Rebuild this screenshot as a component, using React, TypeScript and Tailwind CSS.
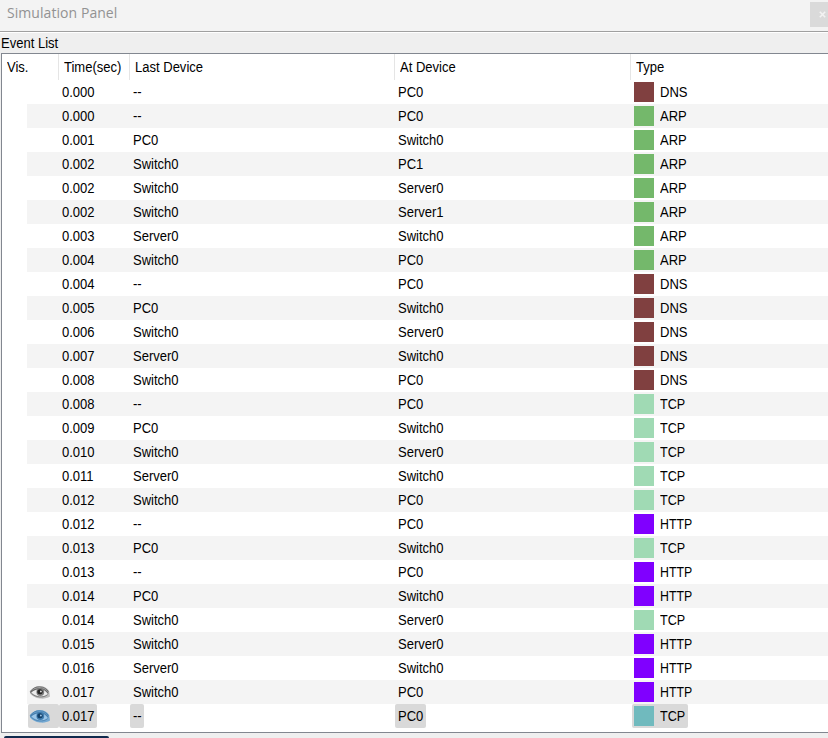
type Kind = "DNS" | "ARP" | "TCP" | "HTTP";
type Event = [time: string, last: string, at: string, kind: Kind];

const events: Event[] = [
  ["0.000", "--", "PC0", "DNS"],
  ["0.000", "--", "PC0", "ARP"],
  ["0.001", "PC0", "Switch0", "ARP"],
  ["0.002", "Switch0", "PC1", "ARP"],
  ["0.002", "Switch0", "Server0", "ARP"],
  ["0.002", "Switch0", "Server1", "ARP"],
  ["0.003", "Server0", "Switch0", "ARP"],
  ["0.004", "Switch0", "PC0", "ARP"],
  ["0.004", "--", "PC0", "DNS"],
  ["0.005", "PC0", "Switch0", "DNS"],
  ["0.006", "Switch0", "Server0", "DNS"],
  ["0.007", "Server0", "Switch0", "DNS"],
  ["0.008", "Switch0", "PC0", "DNS"],
  ["0.008", "--", "PC0", "TCP"],
  ["0.009", "PC0", "Switch0", "TCP"],
  ["0.010", "Switch0", "Server0", "TCP"],
  ["0.011", "Server0", "Switch0", "TCP"],
  ["0.012", "Switch0", "PC0", "TCP"],
  ["0.012", "--", "PC0", "HTTP"],
  ["0.013", "PC0", "Switch0", "TCP"],
  ["0.013", "--", "PC0", "HTTP"],
  ["0.014", "PC0", "Switch0", "HTTP"],
  ["0.014", "Switch0", "Server0", "TCP"],
  ["0.015", "Switch0", "Server0", "HTTP"],
  ["0.016", "Server0", "Switch0", "HTTP"],
  ["0.017", "Switch0", "PC0", "HTTP"],
  ["0.017", "--", "PC0", "TCP"],
];

const swatch: Record<Kind, string> = {
  DNS: "bg-[#804040]",
  ARP: "bg-[#74b86b]",
  TCP: "bg-[#a0dab4]",
  HTTP: "bg-[#8000ff]",
};

function Label({ children, scale = "scale-x-[0.93]" }: { children: string; scale?: string }) {
  return <span className={`block origin-left whitespace-nowrap ${scale}`}>{children}</span>;
}

function Eye({ blue }: { blue?: boolean }) {
  const c = blue
    ? { lid: "#4a80ae", white: "#9cc6e8", iris: "#3f7cae", pupil: "#123f68", shade: "#74a9d3", glint: "#a8d0ee" }
    : { lid: "#6a6a6a", white: "#ececec", iris: "#7c7c7c", pupil: "#242424", shade: "#bdbdbd", glint: "#e4e4e4" };
  return (
    <svg className="h-[15px] w-[22px]" viewBox="0 0 22 15" fill="none">
      <path d="M1 6C3.2 3 6.5 1 10.6 1c4.600 0 8 2 9.600 5l.8 5.500c-2.800 1.800-6.400 2.500-10 2C6.700 13 3 11.200 1 8.500Z" fill={c.shade} />
      <path d="M2.500 7.500C5 4.600 8 3.600 11.500 3.800c3.700.3 6 2.200 7.500 4.700-1.500 2-4.300 3.100-7.500 2.900C7.800 11.200 5 9.900 2.500 7.500Z" fill={c.white} />
      <path d="M1.300 6.500C4 3.200 7 1.800 10.500 1.900c4.200.1 7.300 2 9 4.800" stroke={c.lid} strokeWidth="1" />
      <path d="M1.300 7.500C4.500 4.500 8 3.500 11.500 3.700c3.500.2 6 2 7.800 4.800" stroke={c.lid} strokeWidth="1.300" />
      <circle cx="11.300" cy="7" r="3.900" fill={c.iris} />
      <ellipse cx="11" cy="6.700" rx="2.700" ry="2.500" fill={c.pupil} />
      <circle cx="11.900" cy="6.500" r=".9" fill={c.glint} />
      <path d="M2.300 8.300c2.200 2.200 5 3.300 8.200 3.600 3.200.2 6-.5 8.200-2.300" stroke={c.lid} strokeWidth=".8" />
    </svg>
  );
}

const columns = "grid grid-cols-[57px_71px_265px_236px_1fr]";

function Row({ event, index }: { event: Event; index: number }) {
  const [time, last, at, kind] = event;
  const selected = index === events.length - 1;
  const hl = selected ? "bg-[#d9d9d9]" : "";
  return (
    <div className={`${columns} h-6 ${index % 2 ? "bg-[linear-gradient(90deg,#fff_25px,#f4f4f4_25px)]" : ""}`}>
      <div className="flex pl-[26px]">
        <div className={`flex w-[31px] items-center rounded-[2px] pl-[1px] ${hl}`}>
          {index >= 25 && <Eye blue={selected} />}
        </div>
      </div>
      <div className="flex">
        <div className={`flex w-[38px] items-center rounded-[2px] pl-[3px] ${hl}`}>
          <Label>{time}</Label>
        </div>
      </div>
      <div className="flex">
        <div className={`flex items-center rounded-[2px] pl-[3px] ${selected ? "w-[14px]" : ""} ${hl}`}>
          <Label>{last}</Label>
        </div>
      </div>
      <div className="flex">
        <div className={`flex items-center rounded-[2px] pl-[3px] ${selected ? "w-[31px]" : ""} ${hl}`}>
          <Label>{at}</Label>
        </div>
      </div>
      <div className="flex pl-px">
        <div className={`flex items-center gap-[6px] rounded-[2px] pl-[2px] ${selected ? "w-[56px]" : ""} ${hl}`}>
          <div className={`size-5 shrink-0 ${selected ? "bg-[#70babe]" : swatch[kind]}`} />
          <Label scale={kind === "HTTP" ? "scale-x-[0.88]" : kind === "TCP" ? "scale-x-[0.9]" : "scale-x-[0.93]"}>
            {kind}
          </Label>
        </div>
      </div>
    </div>
  );
}

export default function App() {
  return (
    <div className="flex h-[738px] w-[828px] flex-col overflow-hidden bg-[#efefef] font-['Liberation_Sans',Arial,sans-serif] text-[14px] leading-[20px] text-black">
      <header className="flex h-8 shrink-0 justify-between border-b border-[#a0a0a0] bg-[#f3f3f3]">
        <h1 className="pt-[3px] pl-[7px] font-['Open_Sans','Noto_Sans',sans-serif] text-[14px] tracking-[0.06px] text-[#929292]">
          Simulation Panel
        </h1>
        <button className="mt-[2px] flex h-[25px] w-[18px] items-center justify-end bg-[#dadada]" aria-label="Close">
          <svg className="mr-[2px] size-[7px]" viewBox="0 0 7 7">
            <path d="M.8.8l5.4 5.4M6.2.8L.8 6.2" stroke="#f3f3f3" strokeWidth="1.6" />
          </svg>
        </button>
      </header>
      <div className="h-[21px] shrink-0 border-t border-white pl-px">
        <Label>Event List</Label>
      </div>
      <main className="ml-px h-[680px] shrink-0 border-y border-l border-[#828790] bg-white">
        <div className="-ml-px grid h-[26px] grid-cols-[57px_71px_265px_236px_1fr] *:pt-[3px]">
          <div className="pl-[6px]"><Label>Vis.</Label></div>
          <div className="border-l border-[#e5e5e5] pl-[5px]"><Label>Time(sec)</Label></div>
          <div className="border-l border-[#e5e5e5] pl-[5px]"><Label>Last Device</Label></div>
          <div className="border-l border-[#e5e5e5] pl-[5px]"><Label>At Device</Label></div>
          <div className="border-l border-[#e5e5e5] pl-[5px]"><Label>Type</Label></div>
        </div>
        {events.map((event, index) => (
          <Row key={index} event={event} index={index} />
        ))}
      </main>
      <div className="mt-[3px] ml-[4px] h-[2px] w-[105px] shrink-0 rounded-t-[3px] bg-[#102a4d]" />
    </div>
  );
}
